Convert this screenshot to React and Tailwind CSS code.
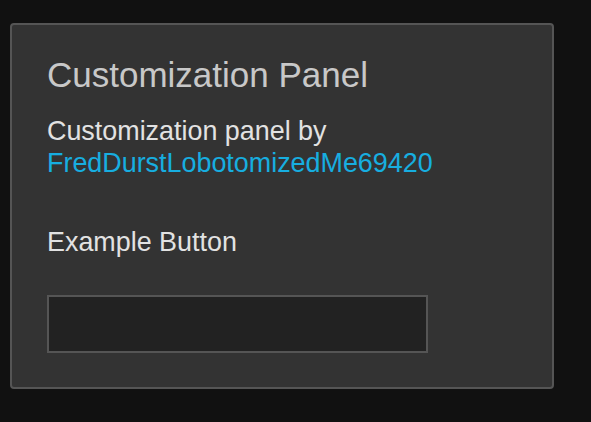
import React from 'react';

const App = () => {
  return (
    <div className="w-[591px] h-[422px] bg-[#111111] overflow-hidden pt-[23px] pl-[10px]" style={{ fontFamily: '"Liberation Sans", Arial, sans-serif' }}>
      <div className="w-[544px] h-[366px] border-2 border-[#555555] rounded-[4px] bg-[#333333] px-[35px] pt-[29px] flex flex-col">
        <h1 className="text-[35px] leading-[42px] text-[#c8c8c8]">Customization Panel</h1>

        <p className="mt-[19px] text-[26.9px] leading-[32px] text-[#e2e2e2]">
          Customization panel by
          <br />
          <a href="#" className="text-[#17aee0]">FredDurstLobotomizedMe69420</a>
        </p>

        <div className="mt-[47px] text-[26.9px] leading-[32px] text-[#e2e2e2]">Example Button</div>

        <input
          type="text"
          className="mt-[37px] w-[381px] h-[58px] bg-[#222222] border-2 border-[#555555] outline-none"
        />
      </div>
    </div>
  );
};

export default App;
